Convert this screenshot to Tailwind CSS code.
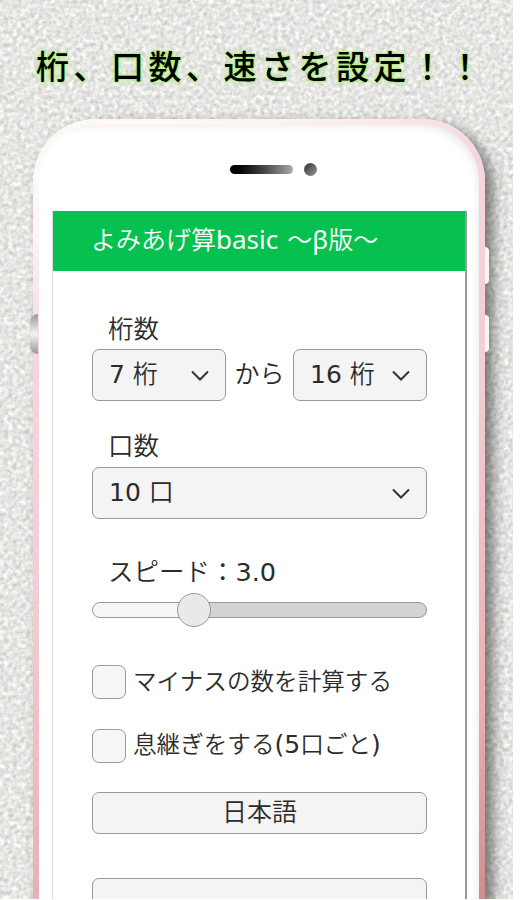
<!DOCTYPE html>
<html lang="ja">
<head>
    <meta charset="UTF-8">
    <meta name="viewport" content="width=device-width, initial-scale=1.0">
    <title>よみあげ算basic</title>
    <script src="https://cdn.jsdelivr.net/npm/@tailwindcss/browser@4"></script>
</head>
<body class="bg-white w-[526px] h-[900px] overflow-hidden">
    <div class="relative w-[513px] h-[899px] overflow-hidden bg-[#e6e6e3]">
        <!-- ざらざらした背景 -->
        <svg class="absolute inset-0" width="513" height="899">
            <filter id="grain" x="0" y="0" width="100%" height="100%" color-interpolation-filters="sRGB">
                <feTurbulence type="fractalNoise" baseFrequency="0.23" numOctaves="3" seed="9"/>
                <feColorMatrix values="0.24 0.18 0 0 0.69  0.24 0.18 0 0 0.69  0.24 0.18 0 0 0.68  0 0 0 0 1"/>
            </filter>
            <rect width="513" height="899" filter="url(#grain)"/>
        </svg>

        <h1 class="relative h-[119px] pt-[41px] pl-[36px] text-[33px] leading-[48px] tracking-[4.5px] font-medium whitespace-nowrap text-black font-['Noto_Sans_CJK_JP',sans-serif] [text-shadow:0_0_2px_#a5ee6b,0_0_3px_#a5ee6b,0_0_4px_#b5f080]">桁、口数、速さを設定！！</h1>

        <!-- スマホ本体 -->
        <div class="relative ml-[33px] w-[452px] h-[860px]">
            <div class="absolute left-[-3px] top-[195px] w-[8px] h-[40px] rounded-l-full bg-gradient-to-b from-[#999] via-[#f3f3f1] to-[#999]"></div>
            <div class="h-full rounded-[62px] p-[6px] bg-[linear-gradient(155deg,#fdfaf8_0%,#fdf5f4_10%,#f6d6dc_23%,#f3cdd3_45%,#e9aeb0_75%,#c67f7f_100%)] shadow-[8px_6px_14px_rgba(0,0,0,0.5)]">
                <div class="h-full rounded-[56px] bg-white shadow-[inset_-6px_6px_10px_-6px_rgba(0,0,0,0.1)]">
                    <div class="flex items-center h-[86px] pl-[191px] pt-[3px] gap-[11px]">
                        <span class="w-[63px] h-[9px] rounded-full bg-gradient-to-r from-black to-[#aaa]"></span>
                        <span class="size-[13px] rounded-full bg-gradient-to-br from-[#333] to-[#999]"></span>
                    </div>

                    <!-- 画面 -->
                    <div class="ml-[13px] w-[415px] h-[760px] border-l border-[#ddd] bg-white border-r-2 border-r-[#999] text-[25px] text-[#2b2b2b] font-[350] font-['Noto_Sans_CJK_JP',sans-serif]">
                        <header class="h-[60px] pl-[38px] bg-[#06c150] text-white leading-[55px] whitespace-nowrap">よみあげ算<span class="text-[26px] font-normal font-['Noto_Sans',sans-serif]">basic</span><span class="ml-[9px]">～</span><span class="text-[26px] font-normal font-['Noto_Sans',sans-serif]">β</span>版～</header>

                        <main class="pl-[39px] pr-[38px] pt-[38px]">
                            <p class="pl-[16px] h-[40px] leading-[35px] text-[25.5px]">桁数</p>
                            <div class="flex justify-between items-center">
                                <div class="flex items-center justify-between w-[134px] h-[52px] pb-[2px] pl-[16px] pr-[15px] rounded-[7px] border-[1.5px] border-[#999] bg-[#f4f4f4] whitespace-nowrap">
                                    <span><span class="font-normal font-['DejaVu_Sans',sans-serif]">7 </span>桁</span>
                                    <svg class="mt-[2px] size-[20px]" viewBox="0 0 20 20" fill="none" stroke="#333" stroke-width="2"><path d="M2 6.5l8 8 8-8"/></svg>
                                </div>
                                <span class="pb-[5px]">から</span>
                                <div class="flex items-center justify-between w-[134px] h-[52px] pb-[2px] pl-[16px] pr-[15px] rounded-[7px] border-[1.5px] border-[#999] bg-[#f4f4f4] whitespace-nowrap">
                                    <span><span class="font-normal font-['DejaVu_Sans',sans-serif]">16 </span>桁</span>
                                    <svg class="mt-[2px] size-[20px]" viewBox="0 0 20 20" fill="none" stroke="#333" stroke-width="2"><path d="M2 6.5l8 8 8-8"/></svg>
                                </div>
                            </div>

                            <p class="mt-[26px] pl-[16px] h-[40px] leading-[34px] text-[25.5px]">口数</p>
                            <div class="flex items-center justify-between h-[52px] pb-[2px] pl-[16px] pr-[15px] rounded-[7px] border-[1.5px] border-[#999] bg-[#f4f4f4]">
                                <span><span class="font-normal font-['DejaVu_Sans',sans-serif]">10 </span>口</span>
                                <svg class="mt-[2px] size-[20px]" viewBox="0 0 20 20" fill="none" stroke="#333" stroke-width="2"><path d="M2 6.5l8 8 8-8"/></svg>
                            </div>

                            <p class="mt-[34px] pl-[16px] h-[40px] leading-[34px] whitespace-nowrap text-[25.5px]">スピード：<span class="font-normal font-['DejaVu_Sans',sans-serif]">3.0</span></p>
                            <div class="relative h-[34px] flex items-center">
                                <div class="w-full h-[16px] rounded-full border-[1.5px] border-[#999] bg-[linear-gradient(to_right,#f6f6f6_30%,#d3d3d3_30%)]"></div>
                                <span class="absolute left-[85px] size-[34px] rounded-full border-[1.5px] border-[#999] bg-[#e9e9e9]"></span>
                            </div>

                            <label class="flex items-center mt-[38px] h-[34px] gap-[7px] text-[23.6px] whitespace-nowrap">
                                <span class="size-[34px] rounded-[7px] border-[1.5px] border-[#999] bg-[#f6f6f6]"></span>
                                <span class="pb-[2px]">マイナスの数を計算する</span>
                            </label>
                            <label class="flex items-center mt-[30px] h-[34px] gap-[7px] text-[23.6px] whitespace-nowrap">
                                <span class="size-[34px] rounded-[7px] border-[1.5px] border-[#999] bg-[#f6f6f6]"></span>
                                <span class="pb-[2px]">息継ぎをする<span class="font-normal text-[25px] font-['DejaVu_Sans',sans-serif]">(5</span>口ごと<span class="font-normal text-[25px] font-['DejaVu_Sans',sans-serif]">)</span></span>
                            </label>

                            <div class="mt-[29px] h-[42px] rounded-[7px] border-[1.5px] border-[#999] bg-[#f4f4f4] text-center leading-[35px]">日本語</div>
                            <div class="mt-[44px] h-[43px] rounded-[7px] border-[1.5px] border-[#999] bg-[#f4f4f4]"></div>
                        </main>
                    </div>
                </div>
            </div>
            <!-- 側面ボタン -->
            <div class="absolute right-[-4px] top-[128px] w-[4px] h-[37px] rounded-r-full bg-[#f7f7f7]"></div>
            <div class="absolute right-[-4px] top-[196px] w-[4px] h-[37px] rounded-r-full bg-[#f7f7f7]"></div>
        </div>
    </div>
</body>
</html>
